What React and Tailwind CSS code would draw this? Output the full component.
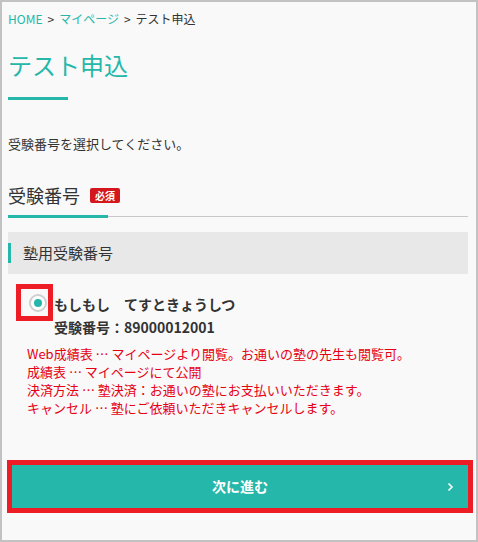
import React from "react";

const notes = [
  "Web成績表 … マイページより閲覧。お通いの塾の先生も閲覧可。",
  "成績表 … マイページにて公開",
  "決済方法 … 塾決済：お通いの塾にお支払いいただきます。",
  "キャンセル … 塾にご依頼いただきキャンセルします。",
];

export default function App() {
  return (
    <div
      className="w-[478px] h-[542px] overflow-hidden border-2 border-[#c2c2c2] bg-[#f9f9f9] pl-[6px] pr-[8px] text-[#333]"
      style={{ fontFamily: '"Noto Sans CJK JP", "Noto Sans", sans-serif' }}
    >
      {/* パンくず */}
      <div className="pt-[7px] text-[12px] leading-[20px]">
        <span className="text-[#25b7aa]">HOME</span>
        <span className="mx-[5px]">&gt;</span>
        <span className="text-[#25b7aa]">マイページ</span>
        <span className="mx-[5px]">&gt;</span>
        <span>テスト申込</span>
      </div>

      <h1 className="mt-[20px] text-[24px] leading-[32px] text-[#25b7aa]">テスト申込</h1>
      <div className="mt-[16px] w-[60px] h-[3px] bg-[#25b7aa]"></div>

      <p className="mt-[34px] text-[13px] leading-[20px]">受験番号を選択してください。</p>

      <div className="mt-[28px] flex items-center h-[26px]">
        <h2 className="text-[18px] leading-[26px]">受験番号</h2>
        <span className="ml-[10px] bg-[#d4161d] text-white text-[10px] font-bold leading-[15px] px-[5px] rounded-[2px]">
          必須
        </span>
      </div>
      <div className="mt-[7px] flex items-center h-[3px]">
        <div className="w-[100px] h-[3px] bg-[#25b7aa]"></div>
        <div className="flex-1 h-px bg-[#c8c8c8]"></div>
      </div>

      <div className="mt-[14px] h-[42px] bg-[#e8e8e8] flex items-center">
        <div className="w-[3px] h-[20px] bg-[#25b7aa]"></div>
        <span className="ml-[12px] text-[15px]">塾用受験番号</span>
      </div>

      <div className="mt-[10px] flex items-start">
        <div className="ml-[8px] w-[37px] h-[37px] border-[5px] border-[#ee1c25] flex items-center justify-end pr-[1px]">
          <div className="w-[18px] h-[18px] rounded-full border-2 border-[#cfcfcf] bg-white flex items-center justify-center">
            <div className="w-[8px] h-[8px] rounded-full bg-[#25b7aa]"></div>
          </div>
        </div>
        <div className="ml-[1px] font-bold text-[14px]">
          <p className="mt-[10px] leading-[20px]">もしもし　てすときょうしつ</p>
          <p className="mt-[3px] leading-[20px]">受験番号：89000012001</p>
        </div>
      </div>

      <div className="mt-[8px] ml-[19px] text-[13px] leading-[18px] text-[#e60012]">
        {notes.map((n, i) => (
          <p key={i}>{n}</p>
        ))}
      </div>

      <div className="mt-[43px] -ml-[1px] -mr-[5px] border-[5px] border-[#ee1c25]">
        <button className="relative w-full h-[43px] bg-[#25b7aa] text-white text-[14px] font-bold">
          次に進む
          <svg
            className="absolute right-[14px] top-1/2 -translate-y-1/2"
            width="7"
            height="10"
            viewBox="0 0 7 10"
            fill="none"
          >
            <path d="M1.5 1.5L5 5L1.5 8.5" stroke="white" strokeWidth="1.6" />
          </svg>
        </button>
      </div>
    </div>
  );
}
